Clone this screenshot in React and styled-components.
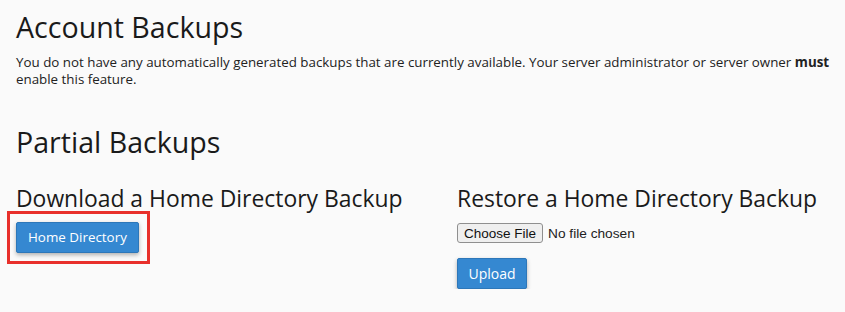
import React from "react";
import styled, { createGlobalStyle } from "styled-components";

const GlobalStyle = createGlobalStyle`
  html, body {
    margin: 0;
    padding: 0;
    background: #fafafa;
  }
  body {
    font-family: "Open Sans", "Liberation Sans", sans-serif;
    color: #222;
  }
`;

const Page = styled.main`
  padding: 10px 12px 0 16px;
`;

const Title = styled.h1`
  margin: 0;
  font-size: 28.6px;
  line-height: 34px;
  font-weight: 400;
  color: #1a1a1a;
`;

const Notice = styled.p`
  margin: 9.5px 0 0;
  font-size: 13.35px;
  line-height: 17px;
  color: #222;

  strong {
    font-weight: 700;
  }
`;

const Section = styled.section`
  margin-top: 37px;
`;

const Columns = styled.div`
  display: grid;
  grid-template-columns: 441px 1fr;
  margin-top: 26px;
`;

const Column = styled.div`
  display: flex;
  flex-direction: column;
  align-items: flex-start;
`;

const SubTitle = styled.h2`
  margin: 0;
  font-size: 22.9px;
  line-height: 28px;
  font-weight: 400;
  color: #1a1a1a;
  white-space: nowrap;
`;

const Highlight = styled.div`
  position: relative;
  margin-top: 9px;

  &::after {
    content: "";
    position: absolute;
    top: -11px;
    left: -9px;
    right: -11px;
    bottom: -11px;
    border: 3px solid #e8302b;
    pointer-events: none;
  }
`;

const Button = styled.button`
  display: inline-flex;
  align-items: center;
  justify-content: center;
  height: 31px;
  padding: 0 ${(p) => p.$pad || 11}px;
  font-family: "Open Sans", "Liberation Sans", sans-serif;
  font-size: ${(p) => p.$size || 13.4}px;
  font-weight: 500;
  color: #fff;
  background: #3588d1;
  border: 1px solid #2d77b9;
  border-radius: 2px;
  box-shadow: 0 2px 4px rgba(0, 0, 0, 0.3);
  cursor: pointer;
`;

const FileRow = styled.div`
  margin-top: 10.5px;
  height: 20px;
  display: flex;
  align-items: center;
`;

const FileInput = styled.input`
  font-family: "Liberation Sans", Arial, sans-serif;
  font-size: 13.7px;
  color: #222;

  &::file-selector-button {
    font-family: "Liberation Sans", Arial, sans-serif;
    font-size: 13.5px;
    height: 20px;
    padding: 0 6px;
    margin-right: 5px;
    color: #111;
    background: #efefef;
    border: 1px solid #8f8f8f;
    border-radius: 3px;
  }
`;

const UploadWrap = styled.div`
  margin-top: 15px;
`;

export default function App() {
  return (
    <>
      <GlobalStyle />
      <Page>
        <Title>Account Backups</Title>
        <Notice>
          You do not have any automatically generated backups that are
          currently available. Your server administrator or server owner{" "}
          <strong>must</strong> enable this feature.
        </Notice>

        <Section>
          <Title>Partial Backups</Title>
          <Columns>
            <Column>
              <SubTitle>Download a Home Directory Backup</SubTitle>
              <Highlight>
                <Button type="button">Home Directory</Button>
              </Highlight>
            </Column>
            <Column>
              <SubTitle>Restore a Home Directory Backup</SubTitle>
              <FileRow>
                <FileInput type="file" />
              </FileRow>
              <UploadWrap>
                <Button type="button" $size={14} $pad={10.5}>
                  Upload
                </Button>
              </UploadWrap>
            </Column>
          </Columns>
        </Section>
      </Page>
    </>
  );
}
